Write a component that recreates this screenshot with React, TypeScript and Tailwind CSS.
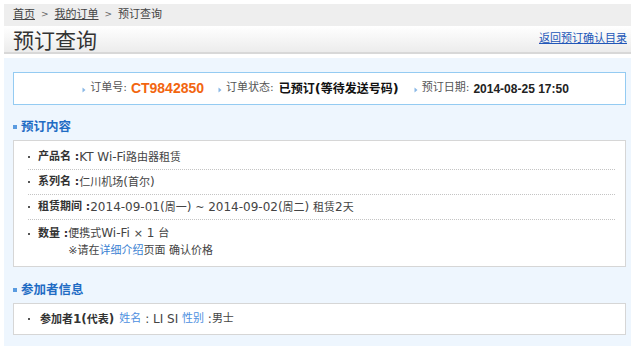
import React from "react";

const CJK = /([\u2000-\u206f\u3000-\u9fff\uff00-\uffef※×~]+)/;

function T({ s }: { s: string }) {
  const parts = s.split(CJK);
  return (
    <>
      {parts.map((p, i) =>
        i % 2 === 1 ? (
          <span key={i} className="text-[11px]">
            {p}
          </span>
        ) : (
          <React.Fragment key={i}>{p}</React.Fragment>
        )
      )}
    </>
  );
}

function Arrow() {
  return (
    <svg width="4" height="6" viewBox="0 0 4 6" className="mr-[4px] mt-[2px] shrink-0">
      <path d="M0.5 0.5 L3.5 3 L0.5 5.5 Z" fill="#8ab8e6" />
    </svg>
  );
}

function Dot() {
  return (
    <span className="w-[10px] h-[17px] flex items-center shrink-0">
      <span className="w-[2px] h-[2px] bg-[#555]" />
    </span>
  );
}

function Heading({ children }: { children: React.ReactNode }) {
  return (
    <div className="flex items-center h-[16px]">
      <span className="w-[4px] h-[4px] bg-[#5a9be0] mr-[4px]" />
      <span className="text-[12.5px] font-bold text-[#1f6cc4]">{children}</span>
    </div>
  );
}

function Row({ label, children, last }: { label: string; children: React.ReactNode; last?: boolean }) {
  return (
    <div
      className={
        last
          ? "flex pt-[5px] pb-[7px] leading-[17px]"
          : "flex items-center h-[25px] border-b border-dotted border-[#c4c4c4]"
      }
    >
      <Dot />
      <span className="font-bold text-[#333] text-[11px] whitespace-pre">{label} :</span>
      <div className="text-[#444]">{children}</div>
    </div>
  );
}

export default function App() {
  return (
    <div
      className="w-[640px] h-[346px] bg-white overflow-hidden text-[12px] text-[#444]"
      style={{ fontFamily: '"DejaVu Sans", "Noto Sans CJK SC", sans-serif' }}
    >
      <div className="ml-[4px] pt-[4px] w-[627px]">
        {/* breadcrumb */}
        <div className="h-[22px] bg-[#eeeeee] flex items-center pl-[9px] text-[11px] text-[#444]">
          <span className="underline">首页</span>
          <span className="mx-[6px] text-[9px] text-[#666]">&gt;</span>
          <span className="underline">我的订单</span>
          <span className="mx-[6px] text-[9px] text-[#666]">&gt;</span>
          <span>预订查询</span>
        </div>
        {/* title */}
        <div className="h-[28px] bg-gradient-to-b from-white to-[#ececec] border-b-2 border-[#d8d8d8] flex items-center justify-between pl-[9px] pr-[4px]">
          <span className="text-[21px] leading-none text-[#333]" style={{ fontFamily: '"Noto Sans CJK SC", sans-serif' }}>
            预订查询
          </span>
          <span className="text-[11px] text-[#2257b8] underline">返回预订确认目录</span>
        </div>
        {/* panel */}
        <div className="mt-[4px] bg-[#eef6fe] pt-[14px] pl-[9px] pr-[5px] pb-[24px]">
          <div className="h-[33px] bg-white border border-[#94cbf2] flex items-center justify-center pl-[12px]">
            <div className="flex items-center">
              <Arrow />
              <span className="text-[11px] text-[#555]">订单号:</span>
              <span
                className="ml-[4px] text-[14px] font-bold text-[#f2650f]"
                style={{ fontFamily: '"Liberation Sans", sans-serif' }}
              >
                CT9842850
              </span>
            </div>
            <div className="flex items-center ml-[14px]">
              <Arrow />
              <span className="text-[11px] text-[#555]">订单状态:</span>
              <span className="ml-[5px] font-bold text-[#111] text-[13px]">
                <span className="text-[12px]">已预订</span>(<span className="text-[12px]">等待发送号码</span>)
              </span>
            </div>
            <div className="flex items-center ml-[15px]">
              <Arrow />
              <span className="text-[11px] text-[#555]">预订日期:</span>
              <span
                className="ml-[4px] font-bold text-[#222] text-[12px]"
                style={{ fontFamily: '"Liberation Sans", sans-serif' }}
              >
                2014-08-25 17:50
              </span>
            </div>
          </div>

          <div className="mt-[14px]">
            <Heading>预订内容</Heading>
          </div>
          <div className="mt-[5px] bg-white border border-[#d6d6d6] pl-[14px] pr-[10px] pt-[4px]">
            <Row label="产品名">
              <T s="KT Wi-Fi路由器租赁" />
            </Row>
            <Row label="系列名">
              <T s="仁川机场(首尔)" />
            </Row>
            <Row label="租赁期间">
              <T s="2014-09-01(周一) ~ 2014-09-02(周二) 租赁2天" />
            </Row>
            <Row label="数量" last>
              <div>
                <T s="便携式Wi-Fi × 1 台" />
              </div>
              <div className="text-[11px]">
                ※请在<span className="text-[#3a7fd2]">详细介绍</span>页面 确认价格
              </div>
            </Row>
          </div>

          <div className="mt-[15px]">
            <Heading>参加者信息</Heading>
          </div>
          <div className="mt-[5px] h-[32px] bg-white border border-[#d6d6d6] pl-[14px] flex items-center whitespace-pre">
            <Dot />
            <span className="ml-[2px] font-bold text-[#333]">
              <T s="参加者1(代表)" />
            </span>
            <span className="ml-[5px] text-[11px] text-[#4d8fe0]">姓名</span>
            <span className="text-[#444]"> : LI SI </span>
            <span className="text-[11px] text-[#4d8fe0]">性别</span>
            <span className="text-[#444]"> :</span>
            <span className="text-[11px] text-[#444]">男士</span>
          </div>
        </div>
      </div>
    </div>
  );
}
